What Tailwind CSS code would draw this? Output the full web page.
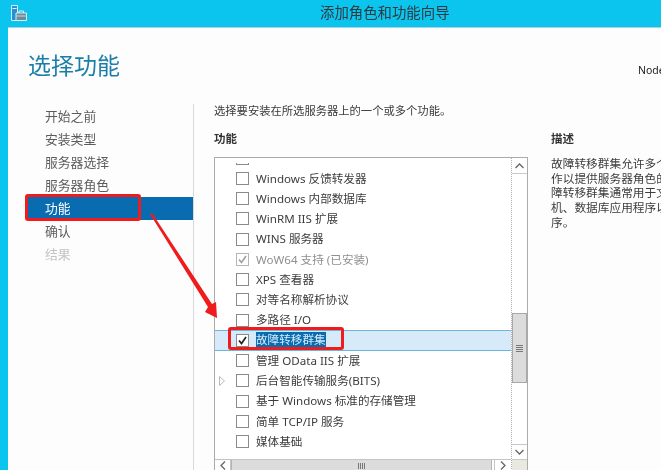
<!DOCTYPE html>
<html lang="zh-CN">
<head>
  <meta charset="UTF-8">
  <title>添加角色和功能向导</title>
  <script src="https://cdn.jsdelivr.net/npm/@tailwindcss/browser@4"></script>
</head>
<body class="w-[661px] h-[470px] overflow-hidden bg-[#0cc5ee] font-['Noto_Sans','Noto_Sans_CJK_SC',sans-serif]">
<div class="relative w-[661px] h-[470px] blur-[0.4px]">

  <!-- title bar -->
  <header class="h-[27px] flex items-center pl-[11px]">
    <svg width="16" height="16" viewBox="0 0 16 16" class="-mt-[2px]">
      <path d="M0.5 0.5H6.5V15.5H0.5Z" fill="#2a8fd0" stroke="#cfeffa"/>
      <path d="M1.5 3.5H5.5" stroke="#e6f7fc"/>
      <path d="M5 8H15.5V15.5H5Z" fill="#6d8b99" stroke="#d5edf4"/>
      <path d="M8 8V6H12.500V8" fill="none" stroke="#d5edf4"/>
      <path d="M5 11H15.500" stroke="#c3d9e2"/>
    </svg>
    <span class="ml-[293px] text-[14.400px] leading-none text-[#2b3a40] whitespace-nowrap">添加角色和功能向导</span>
  </header>

  <!-- window body -->
  <div class="ml-[8px] h-[443px] bg-[#fdfdfd] border-t border-[#a9d3de] flex flex-col">
    <div class="h-[76px] flex items-start justify-between shrink-0 overflow-hidden">
      <h1 class="ml-[20px] mt-[20px] text-[23px] leading-[34px] text-[#1a7fa8]">选择功能</h1>
      <span class="mt-[36px] w-[23px] text-[10.500px] leading-[12px] text-[#222] whitespace-nowrap overflow-hidden">Node</span>
    </div>

    <div class="flex flex-1 min-h-0">
      <!-- steps -->
      <nav class="w-[186px] shrink-0 border-r border-[#d9d9d9] pt-[1px] text-[12.800px] leading-[23px] text-[#5c5c5c]">
        <div class="pl-[37px]">开始之前</div>
        <div class="pl-[37px]">安装类型</div>
        <div class="pl-[37px]">服务器选择</div>
        <div class="pl-[37px]">服务器角色</div>
        <div class="ml-[20px] pl-[17px] bg-[#0a6cb0] text-white">功能</div>
        <div class="pl-[37px]">确认</div>
        <div class="pl-[37px] text-[#c4c4c4]">结果</div>
      </nav>

      <main class="flex-1 min-w-0 pl-[20px]">
        <p class="h-[27px] text-[11.300px] leading-[14px] text-[#3a3a3a] whitespace-nowrap">选择要安装在所选服务器上的一个或多个功能。</p>
        <div class="flex">
          <section class="w-[314px] shrink-0">
            <h2 class="h-[26px] text-[11.500px] leading-[16px] font-bold text-[#333]">功能</h2>
            <!-- feature list -->
            <div class="h-[314px] border border-b-0 border-[#ababab] bg-white flex">
              <div class="w-[296px] flex flex-col">
                <div class="flex-1 min-h-0 mt-[5px] overflow-hidden">
                  <ul class="-mt-[15px] text-[11.600px] text-[#3c3c3c]">
                    <li class="h-[20.250px] flex items-center pl-[21px] gap-[7px] whitespace-nowrap"><span class="w-[13px] h-[13px] border border-[#8a8a8a]"></span>Windows Search 服务</li>
                    <li class="h-[20.250px] flex items-center pl-[21px] gap-[7px] whitespace-nowrap"><span class="w-[13px] h-[13px] border border-[#8a8a8a]"></span>Windows 反馈转发器</li>
                    <li class="h-[20.250px] flex items-center pl-[21px] gap-[7px] whitespace-nowrap"><span class="w-[13px] h-[13px] border border-[#8a8a8a]"></span>Windows 内部数据库</li>
                    <li class="h-[20.250px] flex items-center pl-[21px] gap-[7px] whitespace-nowrap"><span class="w-[13px] h-[13px] border border-[#8a8a8a]"></span>WinRM IIS 扩展</li>
                    <li class="h-[20.250px] flex items-center pl-[21px] gap-[7px] whitespace-nowrap"><span class="w-[13px] h-[13px] border border-[#8a8a8a]"></span>WINS 服务器</li>
                    <li class="h-[20.250px] flex items-center pl-[21px] gap-[7px] whitespace-nowrap text-[#8f8f8f]">
                      <span class="w-[13px] h-[13px] border border-[#b5b5b5] flex items-center justify-center">
                        <svg width="9" height="9" viewBox="0 0 9 9"><path d="M1 4.500L3.500 7.500L8 1" fill="none" stroke="#a0a0a0" stroke-width="1.600"/></svg>
                      </span>WoW64 支持 (已安装)</li>
                    <li class="h-[20.250px] flex items-center pl-[21px] gap-[7px] whitespace-nowrap"><span class="w-[13px] h-[13px] border border-[#8a8a8a]"></span>XPS 查看器</li>
                    <li class="h-[20.250px] flex items-center pl-[21px] gap-[7px] whitespace-nowrap"><span class="w-[13px] h-[13px] border border-[#8a8a8a]"></span>对等名称解析协议</li>
                    <li class="h-[20.250px] flex items-center pl-[21px] gap-[7px] whitespace-nowrap"><span class="w-[13px] h-[13px] border border-[#8a8a8a]"></span>多路径 I/O</li>
                    <li class="h-[20.250px] flex items-center pl-[21px] gap-[7px] whitespace-nowrap bg-[#d6eafa] border-y border-[#6cb6dc]">
                      <span class="w-[13px] h-[13px] border border-[#8a8a8a] bg-white flex items-center justify-center">
                        <svg width="9" height="9" viewBox="0 0 9 9"><path d="M1 4.500L3.500 7.500L8 1" fill="none" stroke="#222" stroke-width="1.700"/></svg>
                      </span><span class="bg-[#0a6cb0] text-[#d8ecf7] leading-[16px]">故障转移群集</span></li>
                    <li class="h-[20.250px] flex items-center pl-[21px] gap-[7px] whitespace-nowrap"><span class="w-[13px] h-[13px] border border-[#8a8a8a]"></span>管理 OData IIS 扩展</li>
                    <li class="h-[20.250px] flex items-center pl-[21px] gap-[7px] whitespace-nowrap relative">
                      <svg class="absolute left-[4px] top-[5px]" width="6" height="10" viewBox="0 0 6 10"><path d="M0.500 0.500L5.500 5L0.500 9.500Z" fill="#fff" stroke="#bbb"/></svg>
                      <span class="w-[13px] h-[13px] border border-[#8a8a8a]"></span>后台智能传输服务(BITS)</li>
                    <li class="h-[20.250px] flex items-center pl-[21px] gap-[7px] whitespace-nowrap"><span class="w-[13px] h-[13px] border border-[#8a8a8a]"></span>基于 Windows 标准的存储管理</li>
                    <li class="h-[20.250px] flex items-center pl-[21px] gap-[7px] whitespace-nowrap"><span class="w-[13px] h-[13px] border border-[#8a8a8a]"></span>简单 TCP/IP 服务</li>
                    <li class="h-[20.250px] flex items-center pl-[21px] gap-[7px] whitespace-nowrap"><span class="w-[13px] h-[13px] border border-[#8a8a8a]"></span>媒体基础</li>
                  </ul>
                </div>
                <!-- horizontal scrollbar -->
                <div class="h-[12px] shrink-0 border-t border-[#c4c4c4] flex">
                  <div class="w-[16px] flex items-center justify-center border-r border-[#c4c4c4]">
                    <svg width="6" height="9" viewBox="0 0 6 9"><path d="M5 0.500L1 4.500L5 8.500" fill="none" stroke="#666" stroke-width="1.300"/></svg>
                  </div>
                  <div class="w-[261px] bg-[#dcdcdc] border-x border-[#b5b5b5] flex justify-center items-center">
                    <div class="w-[7px] h-[6px] bg-[repeating-linear-gradient(90deg,#777_0,#777_1px,#dcdcdc_1px,#dcdcdc_2px)]"></div>
                  </div>
                  <div class="ml-[2px] flex-1 flex items-center justify-center border-l border-[#c4c4c4]">
                    <svg width="6" height="9" viewBox="0 0 6 9"><path d="M1 0.500L5 4.500L1 8.500" fill="none" stroke="#666" stroke-width="1.300"/></svg>
                  </div>
                </div>
              </div>
              <!-- vertical scrollbar -->
              <div class="flex-1 border-l border-dotted border-[#b4a8b8] flex flex-col">
                <div class="h-[16px] border-b border-[#c8c8c8] flex items-center justify-center">
                  <svg width="9" height="6" viewBox="0 0 9 6"><path d="M0.500 5L4.500 1L8.500 5" fill="none" stroke="#666" stroke-width="1.300"/></svg>
                </div>
                <div class="h-[139px]"></div>
                <div class="h-[70px] bg-[#dcdcdc] border border-[#a8a8a8] flex items-center justify-center">
                  <div class="w-[7px] h-[7px] bg-[repeating-linear-gradient(180deg,#777_0,#777_1px,#dcdcdc_1px,#dcdcdc_2px)]"></div>
                </div>
                <div class="h-[61px]"></div>
                <div class="h-[16px] border-y border-[#c8c8c8] flex items-center justify-center">
                  <svg width="9" height="6" viewBox="0 0 9 6"><path d="M0.500 1L4.500 5L8.500 1" fill="none" stroke="#666" stroke-width="1.300"/></svg>
                </div>
                <div class="flex-1 bg-[#e9e9df]"></div>
              </div>
            </div>
          </section>

          <!-- description -->
          <aside class="ml-[23px] w-[110px] overflow-hidden">
            <h2 class="h-[26px] text-[11.500px] leading-[16px] font-bold text-[#333]">描述</h2>
            <div class="mt-[-1px] text-[11.700px] leading-[14.700px] text-[#3c3c3c] whitespace-nowrap">
              <p>故障转移群集允许多个服务器</p>
              <p>作以提供服务器角色的高可用</p>
              <p>障转移群集通常用于文件服务</p>
              <p>机、数据库应用程序以及邮件</p>
              <p>序。</p>
            </div>
          </aside>
        </div>
      </main>
    </div>
  </div>

  <!-- red annotations -->
  <div class="absolute left-[25px] top-[194px] w-[116px] h-[27px] border-[3px] border-[#ee1c1c] rounded-[3px]"></div>
  <div class="absolute left-[228px] top-[327px] w-[116px] h-[23px] border-[3px] border-[#ee1c1c] rounded-[3px]"></div>
  <svg class="absolute left-0 top-0" width="661" height="470" viewBox="0 0 661 470">
    <polygon points="150,214 152,213 212,304 216,302 217,318 205,312 208,307" fill="#ee1c1c"/>
  </svg>
</div>
</body>
</html>
